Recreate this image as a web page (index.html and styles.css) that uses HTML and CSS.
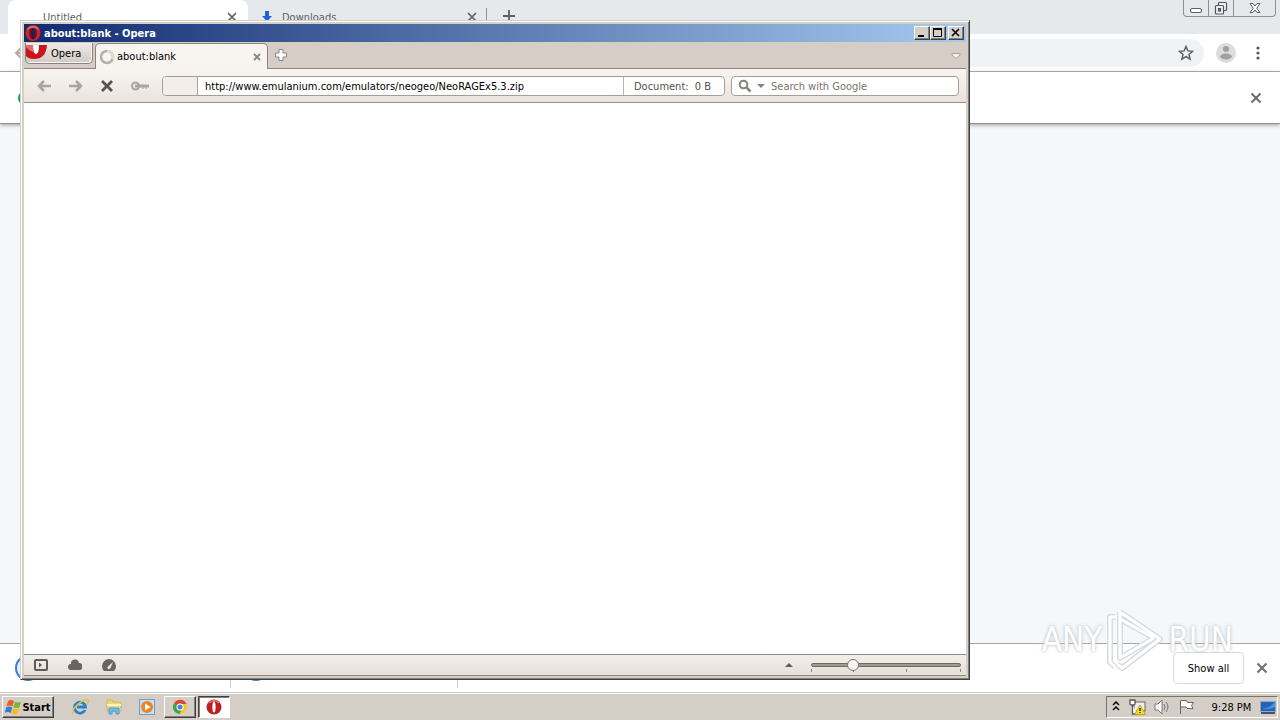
FILE: index.html
```html
<!DOCTYPE html>
<html lang="en">
<head>
<meta charset="utf-8">
<title>about:blank - Opera</title>
<link rel="stylesheet" href="styles.css">
</head>
<body>
<div class="desktop">
  <main class="chrome">
    <div class="chrome-tabs">
      <div class="ctab active"><span class="ctab-title">Untitled</span>
        <button class="plain" aria-label="Close Untitled"><svg width="10" height="10" viewBox="0 0 10 10"><path d="M1 1l8 8M9 1l-8 8" stroke="#5c6165" stroke-width="1.7"/></svg></button></div>
      <div class="ctab"><svg width="12" height="12" viewBox="0 0 12 12"><path d="M4 0h4v5h3l-5 5.500-5-5.500h3z" fill="#1a66d6"/></svg><span class="ctab-title">Downloads</span>
        <button class="plain" aria-label="Close Downloads"><svg width="10" height="10" viewBox="0 0 10 10"><path d="M1 1l8 8M9 1l-8 8" stroke="#5c6165" stroke-width="1.7"/></svg></button></div>
      <button class="plain newtab" aria-label="New tab"><svg width="12" height="12" viewBox="0 0 12 12"><path d="M6 0v12M0 6h12" stroke="#5c6165" stroke-width="1.800"/></svg></button>
      <div class="win-controls">
        <button aria-label="Minimize"><svg width="14" height="14" viewBox="0 0 14 14"><rect x="1.500" y="7.500" width="11" height="4" rx="1.500" fill="#fff" stroke="#5a606a"/></svg></button>
        <button aria-label="Restore"><svg width="14" height="14" viewBox="0 0 14 14"><g fill="#f2f4f5" stroke="#505661" stroke-width="1.200"><rect x="4.500" y="1.500" width="8" height="8" rx="1"/><rect x="1.500" y="4.500" width="8" height="8.500" rx="1"/><rect x="4.500" y="7.500" width="2" height="2.500"/></g></svg></button>
        <button class="wide" aria-label="Close"><svg width="14" height="14" viewBox="0 0 14 14"><path d="M2 2.500h3l2 2.500 2-2.500h3L8.700 7.300l3.300 4.200H9L7 9l-2 2.500H2l3.300-4.200z" fill="#fff" stroke="#5a606a"/></svg></button>
      </div>
    </div>
    <div class="chrome-bar">
      <button class="plain" aria-label="Back"><svg width="14" height="14" viewBox="0 0 14 14"><path d="M13 7H2M7 2L2 7l5 5" fill="none" stroke="#b9a9ae" stroke-width="2"/></svg></button>
      <div class="omnibox"><svg width="16" height="16" viewBox="0 0 16 16"><path d="M8 1.500l1.900 4.400 4.700.4-3.600 3.100 1.100 4.700L8 11.600l-4.100 2.500L5 9.400 1.400 6.300l4.700-.4z" fill="none" stroke="#5c6165" stroke-width="1.500"/></svg></div>
      <button class="plain" aria-label="Profile"><svg width="20" height="20" viewBox="0 0 20 20"><circle cx="10" cy="10" r="10" fill="#dcdcdc"/><circle cx="10" cy="6" r="3" fill="#a0a0a0"/><ellipse cx="10" cy="13.500" rx="5.800" ry="3" fill="#a0a0a0"/></svg></button>
      <button class="plain menu" aria-label="Menu"><svg width="4" height="14" viewBox="0 0 4 14"><g fill="#55595d"><circle cx="2" cy="2" r="1.600"/><circle cx="2" cy="7" r="1.600"/><circle cx="2" cy="12" r="1.600"/></g></svg></button>
    </div>
    <div class="infobar"><span class="green"></span><button class="plain" aria-label="Dismiss"><svg width="12" height="12" viewBox="0 0 12 12"><path d="M1.500 1.500l9 9M10.500 1.500l-9 9" stroke="#686868" stroke-width="1.800"/></svg></button></div>
    <div class="chrome-page"></div>
    <div class="shelf">
      <div class="download"><svg width="26" height="26" viewBox="0 0 26 26"><circle cx="13" cy="13" r="12" fill="#e5eefb" stroke="#3e7bd2" stroke-width="2"/></svg></div>
      <div class="download"><svg width="26" height="26" viewBox="0 0 26 26"><circle cx="13" cy="13" r="12" fill="#e5eefb" stroke="#3e7bd2" stroke-width="2"/></svg></div>
      <button class="show-all">Show all</button>
      <button class="plain" aria-label="Close downloads"><svg width="12" height="12" viewBox="0 0 12 12"><path d="M1.500 1.500l9 9M10.500 1.500l-9 9" stroke="#757575" stroke-width="2.200"/></svg></button>
    </div>
  </main>

  <section class="opera">
    <header class="titlebar">
      <svg width="16" height="16" viewBox="0 0 16 16"><ellipse cx="8" cy="8" rx="7.500" ry="8" fill="#cf2427"/><ellipse cx="8" cy="8" rx="4" ry="6.800" fill="#86101a"/><ellipse cx="8" cy="8" rx="2.200" ry="5.800" fill="#1b1f52"/><path d="M2 5q1-4 6-4 5 0 6 4-6-4-12 0" fill="#f3a3a3" opacity=".6"/></svg>
      <h1>about:blank - Opera</h1>
      <div class="caps">
        <button aria-label="Minimize window"><svg width="10" height="10" viewBox="0 0 10 10"><path d="M1 8h6" stroke="#000" stroke-width="2"/></svg></button>
        <button aria-label="Maximize window"><svg width="10" height="10" viewBox="0 0 10 10"><path d="M.5 1v7.500h8V1" fill="none" stroke="#000"/><path d="M0 1h9" stroke="#000" stroke-width="2"/></svg></button>
        <button class="close" aria-label="Close window"><svg width="10" height="10" viewBox="0 0 10 10"><path d="M1 1l7 7M8 1L1 8" stroke="#000" stroke-width="1.600"/></svg></button>
      </div>
    </header>
    <nav class="tabbar">
      <button class="opera-menu"><svg width="21" height="17" viewBox="0 0 21 17"><path d="M0 2h21q-1 14-13 14-6 0-8-3z" fill="#c9151c"/><path d="M0 2h7v7q-4-1-7-5z" fill="#e56a68"/><path d="M7 2h6q0 9-3 9T7 2" fill="#fff"/></svg>Opera</button>
      <div class="otab"><svg width="16" height="16" viewBox="0 0 16 16"><circle cx="8" cy="8" r="6" fill="none" stroke="#b3afaa" stroke-width="2.500"/><path d="M8 2a6 6 0 0 1 5.500 8.500" fill="none" stroke="#dedbd7" stroke-width="2.500"/></svg><span>about:blank</span><button class="plain" aria-label="Close tab"><svg width="8" height="8" viewBox="0 0 8 8"><path d="M1 1l6 6M7 1l-6 6" stroke="#8b8680" stroke-width="1.800"/></svg></button></div>
      <button class="plain add" aria-label="New tab"><svg width="14" height="14" viewBox="0 0 14 14"><path d="M5 1.500h4V5h3.500v4H9v3.500H5V9H1.500V5H5z" fill="#fff" stroke="#8c8780"/></svg></button>
      <button class="plain trash" aria-label="Closed tabs"><svg width="10" height="8" viewBox="0 0 10 8"><path d="M1 1.500h8v1.500L5 6.500 1 3z" fill="#f5f1ed" stroke="#a9a39c"/></svg></button>
    </nav>
    <div class="toolbar">
      <div class="navs">
        <button class="plain" aria-label="Back"><svg width="14" height="12" viewBox="0 0 14 12"><path d="M14 6H2M7 1L2 6l5 5" fill="none" stroke="#aaa49e" stroke-width="2.500"/></svg></button>
        <button class="plain" aria-label="Forward"><svg width="14" height="12" viewBox="0 0 14 12"><path d="M0 6h12M7 1l5 5-5 5" fill="none" stroke="#aaa49e" stroke-width="2.500"/></svg></button>
        <button class="plain" aria-label="Stop"><svg width="12" height="12" viewBox="0 0 12 12"><path d="M1 1l10 10M11 1L1 11" stroke="#57534e" stroke-width="2.800"/></svg></button>
        <button class="plain" aria-label="Wand"><svg width="18" height="10" viewBox="0 0 18 10"><circle cx="4.500" cy="5" r="3.500" fill="none" stroke="#aaa49e" stroke-width="2"/><path d="M4 5h14" stroke="#aaa49e" stroke-width="3"/><path d="M12 6v2M15 6v2" stroke="#aaa49e"/></svg></button>
      </div>
      <div class="address"><span class="badge"></span><input type="text" aria-label="Address" value="http://www.emulanium.com/emulators/neogeo/NeoRAGEx5.3.zip"><div class="progress"><span>Document:</span><span>0 B</span></div></div>
      <div class="search"><svg width="30" height="14" viewBox="0 0 30 14"><circle cx="5.500" cy="5.500" r="3.800" fill="none" stroke="#88837e" stroke-width="2"/><path d="M8.500 8.500l4 4" stroke="#88837e" stroke-width="2.500"/><path d="M19 5h8l-4 4z" fill="#88837e"/></svg><input type="text" aria-label="Search" placeholder="Search with Google"></div>
    </div>
    <div class="blank"></div>
    <footer class="status">
      <button class="plain" aria-label="Panels"><svg width="14" height="12" viewBox="0 0 14 12"><rect x="1" y="1" width="12" height="10" rx="1" fill="none" stroke="#5f5b56" stroke-width="2"/><path d="M5 3.500L8 6 5 8.500z" fill="#5f5b56"/></svg></button>
      <button class="plain" aria-label="Opera Link"><svg width="14" height="12" viewBox="0 0 14 12"><path d="M3 11a3 3 0 0 1 0-6 4 4 0 0 1 8-1 3.500 3.500 0 0 1 0 7z" fill="#696560"/></svg></button>
      <button class="plain" aria-label="Opera Turbo"><svg width="14" height="12" viewBox="0 0 14 12"><path d="M2 12a7 7 0 1 1 10 0z" fill="#696560"/><path d="M11 3L8.500 9Q7 11 5.500 9.500 5 8 6.500 7z" fill="#eee7e1"/></svg></button>
      <button class="plain up" aria-label="View options"><svg width="8" height="4" viewBox="0 0 8 4"><path d="M0 4l4-4 4 4z" fill="#5f5b56"/></svg></button>
      <div class="zoom"><input type="range" aria-label="Zoom" min="0" max="100" value="26"><div class="ticks"><i></i><i></i><i></i><i></i></div></div>
    </footer>
  </section>

  <div class="watermark"><span>ANY</span><svg width="66" height="64" viewBox="0 0 66 64"><g fill="none" stroke="#d9dcde" stroke-width="6" stroke-linejoin="round"><path d="M18 4l40 27-38 29-5-4M18 4v46l34-20M18 11l34 19M13 9H8v45l5 5"/></g><g fill="none" stroke="#fff" stroke-width="3" stroke-linejoin="round"><path d="M18 4l40 27-38 29-5-4M18 4v46l34-20M18 11l34 19M13 9H8v45l5 5"/></g></svg><span>RUN</span></div>

  <footer class="taskbar">
    <button class="start"><svg width="17" height="16" viewBox="0 0 17 16"><path d="M3 2q3-2 6 0L7.500 7.500q-3-2-6 0z" fill="#e95d2b"/><path d="M10 2.500q3 2 6 0L14.500 8q-3 2-6 0z" fill="#77b82e"/><path d="M1.200 8.500q3-2 6 0L5.700 14q-3-2-6 0z" fill="#2f7fd0"/><path d="M8.200 9q3 2 6 0l-1.500 5.500q-3 2-6 0z" fill="#f6bd22"/></svg>Start</button>
    <div class="quick">
      <button class="plain" aria-label="Internet Explorer"><svg width="18" height="18" viewBox="0 0 18 18"><path d="M14 12A5.500 5.500 0 1 1 14.500 9H6" fill="none" stroke="#2384d2" stroke-width="2.800"/><path d="M2 16C-1 12 12 0 17 2q1 1-1 4" fill="none" stroke="#e8c13d" stroke-width="1.500"/></svg></button>
      <button class="plain" aria-label="Explorer"><svg width="16" height="16" viewBox="0 0 16 16"><path d="M1 3V1h5l1 2h8v9H1z" fill="#f0d77c" stroke="#d3b455"/><path d="M1 6h14" stroke="#fff4c2" stroke-width="2"/><path d="M3 15V9h10v6h-3v-3H6v3z" fill="#72bde5" stroke="#4b9cd0"/></svg></button>
      <button class="plain" aria-label="Media Player"><svg width="16" height="16" viewBox="0 0 16 16"><rect x=".5" y=".5" width="15" height="15" fill="#c5e1f5" stroke="#6b9fcb"/><circle cx="8" cy="8" r="6" fill="#ed8620"/><path d="M6 4.500v7L11.500 8z" fill="#fff"/></svg></button>
    </div>
    <button class="task" aria-label="Chrome"><svg width="16" height="16" viewBox="0 0 16 16"><circle cx="8" cy="8" r="7" fill="#fbc62c"/><path d="M8 8L2 4.300A7 7 0 0 1 14.500 5H8z" fill="#df4434"/><path d="M8 8l-6-3.700A7 7 0 0 0 7.500 15L10 10z" fill="#3ca357"/><circle cx="8" cy="8" r="3.500" fill="#fff"/><circle cx="8" cy="8" r="2.500" fill="#4285db"/></svg></button>
    <button class="task on" aria-label="Opera"><svg width="16" height="16" viewBox="0 0 16 16"><circle cx="8" cy="8" r="7.500" fill="#bf1d20"/><path d="M3 4q5-5 10 0" fill="none" stroke="#e77b79" stroke-width="1.500"/><ellipse cx="8" cy="8" rx="1.600" ry="5.500" fill="#fff"/></svg></button>
    <div class="tray">
      <svg width="8" height="12" viewBox="0 0 8 12"><path d="M1 4l3-3 3 3M1 9l3-3 3 3" fill="none" stroke="#000" stroke-width="1.500"/></svg>
      <svg width="17" height="16" viewBox="0 0 17 16"><rect x="5" y="3" width="11" height="9" fill="#eee" stroke="#666"/><path d="M1 1h5v4q0 1-2 1H3q-2 0-2-1zM3.500 6v9h5" fill="#fff" stroke="#555" stroke-width="1.300"/><path d="M11 6l5.500 9.500h-11z" fill="#ffdd22" stroke="#a98b00" stroke-width=".7"/><path d="M11 9v3M11 13v1" stroke="#111" stroke-width="1.300"/></svg>
      <svg width="16" height="16" viewBox="0 0 16 16"><path d="M1 5h3l4-4v14l-4-4H1z" fill="#fff" stroke="#777"/><path d="M10 5q2 3 0 6M12 3q4 5 0 10" fill="none" stroke="#777"/></svg>
      <svg width="16" height="16" viewBox="0 0 16 16"><path d="M1.500 15V1.500h6l1 2h6l-2 3 1.500 3H8l-1-1.500H2" fill="#fff" stroke="#666"/></svg>
      <time>9:28 PM</time>
      <svg width="16" height="13" viewBox="0 0 16 13"><rect x=".5" y=".5" width="15" height="10" fill="#2063bd" stroke="#8fa9c4"/><path d="M1 8q8 0 14-7v5q-6 3-14 2" fill="#4b91dd"/><path d="M1 12h14" stroke="#4c535b" stroke-width="2"/></svg>
    </div>
  </footer>
</div>
</body>
</html>
```
FILE: styles.css
```css
* { box-sizing: border-box; }
body { margin: 0; font-family: "DejaVu Sans Condensed", "DejaVu Sans", sans-serif; font-size: 11px; color: #000; }
button, input { font: inherit; color: inherit; margin: 0; padding: 0; }
svg { display: block; flex: none; }
.plain { border: 0; background: none; display: flex; }
.desktop { position: relative; height: 100vh; display: flex; flex-direction: column; overflow: hidden; }

.chrome { flex: 1; display: flex; flex-direction: column; background: #fff; min-height: 0; }
.chrome-tabs { height: 34px; display: flex; background: #e5e9ec; padding-left: 8px; }
.ctab { width: 240px; display: flex; align-items: center; padding: 0 11px 0 13px; gap: 9px; color: #5c6165; }
.ctab.active { background: #fff; border-radius: 8px 8px 0 0; padding: 0 11px 0 35px; }
.ctab-title { flex: 1; }
.newtab { border-left: 1px solid #8a9094; margin: 8px 0 8px -2px; padding: 2px 0 0 16px; }
.win-controls { display: flex; margin-left: auto; margin-right: 4px; height: 17px; border: 1px solid #8b9095; border-top: 0; border-radius: 0 0 4px 4px; }
.win-controls button { width: 25px; border: 0; border-right: 1px solid #8b9095; background: none; display: flex; justify-content: center; align-items: center; }
.win-controls .wide { width: 41px; border-right: 0; }
.chrome-bar { height: 38px; display: flex; align-items: center; padding: 0 20px 0 14px; border-bottom: 1px solid #a4a8ab; }
.omnibox { flex: 1; height: 28px; margin: 0 12px 0 20px; border-radius: 14px; background: #f0f3f5; display: flex; align-items: center; justify-content: flex-end; padding-right: 10px; }
.menu { margin-left: 20px; }
.infobar { height: 52px; display: flex; align-items: center; justify-content: space-between; padding: 0 18px; border-bottom: 1px solid #8e9092; box-shadow: 0 1px 4px #9a9da0; z-index: 1; }
.green { width: 14px; height: 14px; border-radius: 7px; background: #169a57; }
.chrome-page { flex: 1; background: #f5f8fb; }
.shelf { height: 49px; display: flex; align-items: center; border-top: 1px solid #a4a6a8; padding-right: 12px; }
.download { width: 227px; height: 40px; display: flex; align-items: center; padding-left: 12px; border-right: 1px solid #ccc; }
.download:first-child { width: 231px; padding-left: 15px; }
.show-all { margin-left: auto; margin-right: 12px; width: 71px; height: 32px; background: #fff; border: 1px solid #d9dcdf; border-radius: 4px; }

.opera { position: absolute; inset: 20px 310px 40px 20px; display: flex; flex-direction: column; padding: 3px; background: #d4d0c8; border: 1px solid; border-color: #d8d0c8 #404040 #404040 #d8d0c8; box-shadow: inset 1px 1px #fff, inset -1px -1px #808080; z-index: 2; }
.titlebar { height: 18px; display: flex; align-items: center; padding: 0 2px 0 1px; gap: 3px; color: #fff; background: linear-gradient(90deg, #102a70, #a6caf0); }
h1 { margin: 0; font-size: 11px; font-weight: bold; flex: 1; }
.caps { display: flex; }
.caps button { width: 16px; height: 14px; display: flex; align-items: center; justify-content: center; background: #d4d0c8; border: 1px solid; border-color: #fff #404040 #404040 #fff; box-shadow: inset -1px -1px #808080; }
.caps .close { margin-left: 2px; }
.tabbar { height: 27px; display: flex; align-items: flex-start; background: #d6cec6; border-bottom: 1px solid #8a857c; padding: 1px 5px 0 1px; }
.opera-menu { width: 68px; height: 21px; display: flex; gap: 4px; align-items: center; background: linear-gradient(#eeeae6, #d2cbc4); border: 1px solid #8a857c; border-top: 0; border-radius: 0 0 5px 5px; box-shadow: inset -1px -1px #faf8f5; overflow: hidden; }
.opera-menu svg { align-self: flex-start; }
.otab { width: 173px; height: 26px; margin-left: 2px; display: flex; align-items: center; gap: 2px; padding: 0 6px 0 3px; background: #f8f5f1; border: 1px solid #8a857c; border-bottom: 0; border-radius: 5px 5px 0 0; }
.otab span { flex: 1; }
.add { margin: 5px 0 0 6px; }
.trash { margin: 9px 0 0 auto; }
.toolbar { height: 34px; display: flex; align-items: center; background: linear-gradient(#f8f5f0, #eae3dc); border-bottom: 1px solid #989289; padding: 0 7px 0 13px; }
.navs { display: flex; align-items: center; justify-content: space-between; width: 112px; }
.address, .search { height: 20px; display: flex; background: #fff; border: 1px solid #a39e95; border-radius: 4px; align-items: center; overflow: hidden; }
.address { flex: 1; margin: 0 6px 0 13px; }
.badge { width: 35px; height: 18px; background: #f3eee9; border-right: 1px solid #aaa59d; }
.address input, .search input { border: 0; outline: 0; background: none; min-width: 0; flex: 1; height: 18px; padding-top: 1px; }
.address input { padding-left: 7px; }
.progress { width: 101px; height: 18px; border-left: 1px solid #bbb6af; display: flex; align-items: center; justify-content: space-between; padding: 1px 13px 0 10px; color: #55514d; }
.search { width: 228px; padding-left: 6px; gap: 3px; }
.search input::placeholder { color: #77736f; opacity: 1; }
.blank { flex: 1; background: #fff; }
.status { height: 22px; display: flex; align-items: center; gap: 20px; padding: 0 5px 0 10px; background: linear-gradient(#f3eee9, #e7dfd8); border-top: 1px solid #8f8b84; border-bottom: 1px solid #8f8b84; }
.up { margin-left: auto; margin-right: -2px; }
.zoom { width: 150px; height: 12px; position: relative; }
.zoom input { appearance: none; width: 100%; height: 12px; display: block; background: none; position: relative; z-index: 1; }
.zoom input::-webkit-slider-runnable-track { height: 4px; background: #a09b92; border: 1px solid #706b64; border-radius: 2px; }
.zoom input::-webkit-slider-thumb { appearance: none; width: 12px; height: 12px; margin-top: -5px; border: 1px solid #77736d; border-radius: 50%; background: #f8f6f3; }
.ticks { position: absolute; inset: 10px 0 0; display: grid; grid-template-columns: 42fr 53fr 54fr 1px; }
.ticks i { width: 1px; height: 3px; background: #8a857e; }

.watermark { position: absolute; right: 47px; bottom: 48px; display: flex; align-items: center; z-index: 3; color: #fff; font-size: 33px; line-height: 40px; text-shadow: 0 0 2px #c5c8ca, 0 0 4px #c5c8ca; }

.taskbar { height: 28px; display: flex; align-items: center; padding: 2px 2px 1px; background: #d5cec7; border-top: 1px solid #ccc; box-shadow: inset 0 1px #fff; }
.start, .task { height: 22px; display: flex; align-items: center; justify-content: center; background: #d5cec7; border: 1px solid; border-color: #fff #404040 #404040 #fff; box-shadow: inset -1px -1px #808080; }
.start { width: 52px; font-weight: bold; }
.quick { display: flex; width: 110px; padding: 0 9px 0 17px; align-items: center; justify-content: space-between; }
.task { width: 32px; margin-right: 2px; }
.task.on { background: #fff; border-color: #404040 #fff #fff #404040; box-shadow: inset 1px 1px #808080; }
.tray { margin-left: auto; height: 22px; width: 172px; display: flex; align-items: center; justify-content: space-between; padding: 0 1px 0 5px; border: 1px solid; border-color: #77736d #fff #fff #77736d; }
time { margin-left: 8px; }
```
